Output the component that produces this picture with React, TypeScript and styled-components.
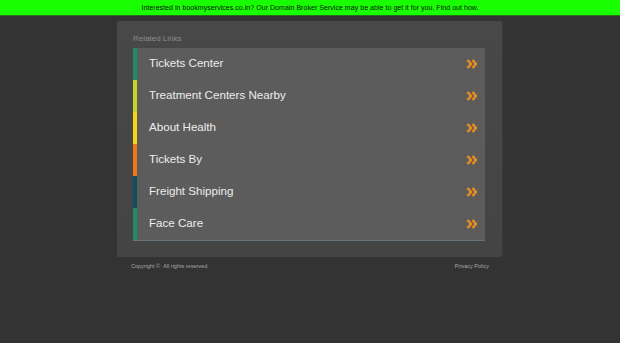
import React from "react";
import styled, { createGlobalStyle } from "styled-components";

const Global = createGlobalStyle`
  html, body { margin: 0; padding: 0; background: #333333; }
  body { font-family: "Liberation Sans", Arial, sans-serif; }
`;

const TopBar = styled.div`
  height: 15px;
  background: #17ff00;
  border-bottom: 1px solid #2a6a1c;
  display: flex;
  align-items: center;
  justify-content: center;
  font-size: 7.1px;
  color: #111;
`;

const Wrap = styled.div`
  width: 386px;
  margin: 5px auto 0;
`;

const Panel = styled.div`
  background: linear-gradient(#484848, #444444);
  border-radius: 2px;
  padding: 14px 16px 16px 16px;
  border-right: 1px solid #3a3a3a;
`;

const Title = styled.div`
  font-size: 8px;
  color: #8c8c8c;
  height: 13px;
  line-height: 8px;
`;

const List = styled.div`
  background: #5c5c5c;
  border-bottom: 1px solid #66737a;
  display: flex;
  flex-direction: column;
  margin-right: 1px;
`;

const Row = styled.div<{ $c: string }>`
  height: 32px;
  display: flex;
  align-items: center;
  border-left: 4px solid ${(p) => p.$c};
  padding-left: 12px;
  padding-right: 6px;
  color: #ededed;
  font-size: 11.6px;
`;

const Label = styled.span`
  flex: 1;
  padding-bottom: 3px;
`;

const Arrow = styled.svg`
  width: 12px;
  height: 10px;
  margin-right: 1px;
  margin-bottom: 1px;
`;

const Footer = styled.div`
  display: flex;
  justify-content: space-between;
  padding: 6px 14px 0 14px;
  font-size: 5.5px;
  color: #a8a8a8;
`;

const items: [string, string][] = [
  ["Tickets Center", "#228a6c"],
  ["Treatment Centers Nearby", "#c3d52b"],
  ["About Health", "#f7d511"],
  ["Tickets By", "#f27811"],
  ["Freight Shipping", "#114c60"],
  ["Face Care", "#228a6c"],
];

const Chevrons = () => (
  <Arrow viewBox="0 0 12 10">
    <path d="M1.5 1 L5 5 L1.5 9 M6.5 1 L10 5 L6.5 9" fill="none" stroke="#eb8f1e" strokeWidth="2.4" strokeLinejoin="miter" />
  </Arrow>
);

export default function App() {
  return (
    <>
      <Global />
      <TopBar>Interested in bookmyservices.co.in? Our Domain Broker Service may be able to get it for you. Find out how.</TopBar>
      <Wrap>
        <Panel>
          <Title>Related Links</Title>
          <List>
            {items.map(([t, c]) => (
              <Row key={t} $c={c}>
                <Label>{t}</Label>
                <Chevrons />
              </Row>
            ))}
          </List>
        </Panel>
        <Footer>
          <span>Copyright © &nbsp;All rights reserved.</span>
          <span>Privacy Policy</span>
        </Footer>
      </Wrap>
    </>
  );
}
